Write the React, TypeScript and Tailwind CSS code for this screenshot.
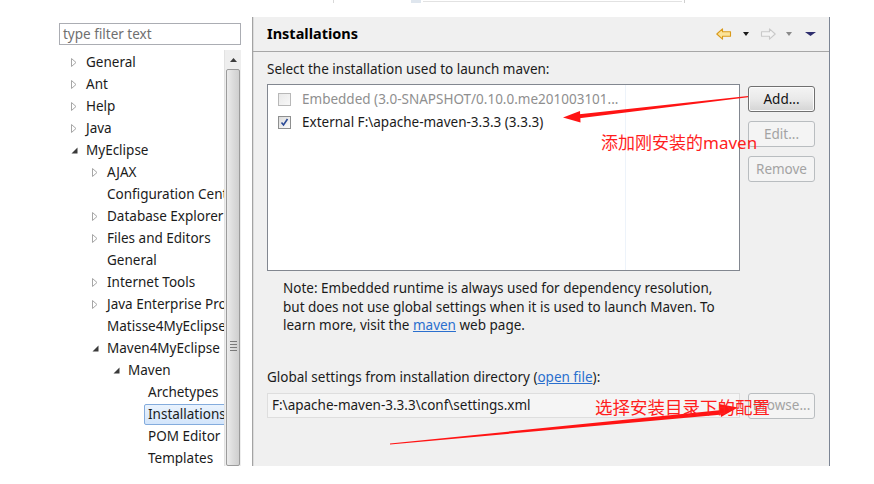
import React from "react";

type Node = { label: string; level: 0 | 1 | 2 | 3; state?: "open" | "closed"; selected?: boolean };

const tree: Node[] = [
  { label: "General", level: 0, state: "closed" },
  { label: "Ant", level: 0, state: "closed" },
  { label: "Help", level: 0, state: "closed" },
  { label: "Java", level: 0, state: "closed" },
  { label: "MyEclipse", level: 0, state: "open" },
  { label: "AJAX", level: 1, state: "closed" },
  { label: "Configuration Center", level: 1 },
  { label: "Database Explorer", level: 1, state: "closed" },
  { label: "Files and Editors", level: 1, state: "closed" },
  { label: "General", level: 1 },
  { label: "Internet Tools", level: 1, state: "closed" },
  { label: "Java Enterprise Project", level: 1, state: "closed" },
  { label: "Matisse4MyEclipse", level: 1 },
  { label: "Maven4MyEclipse", level: 1, state: "open" },
  { label: "Maven", level: 2, state: "open" },
  { label: "Archetypes", level: 3 },
  { label: "Installations", level: 3, selected: true },
  { label: "POM Editor", level: 3 },
  { label: "Templates", level: 3 },
];

const indent = ["pl-[8px]", "pl-[29px]", "pl-[50px]", "pl-[70px]"];

function Twisty({ state }: { state?: "open" | "closed" }) {
  return (
    <span className="w-[14px] mr-[5px] flex items-center justify-center shrink-0">
      {state === "closed" && (
        <svg width="6" height="9" viewBox="0 0 6 9">
          <path d="M0.5 0.5 L5 4.5 L0.5 8.5 Z" fill="#fff" stroke="#a6a6a6" />
        </svg>
      )}
      {state === "open" && (
        <svg width="7" height="7" viewBox="0 0 7 7">
          <path d="M6.5 0.5 L6.5 6.5 L0.5 6.5 Z" fill="#3a3a3a" />
        </svg>
      )}
    </span>
  );
}

function Checkbox({ checked, disabled }: { checked?: boolean; disabled?: boolean }) {
  return (
    <span
      className={
        disabled
          ? "w-[13px] h-[13px] border border-[#b8b8b8] bg-gradient-to-br from-[#e9e9e9] to-[#f8f8f8] flex items-center justify-center shrink-0"
          : "w-[13px] h-[13px] border border-[#8e8f8f] bg-gradient-to-br from-[#dcdcdc] to-[#fbfbfb] flex items-center justify-center shrink-0"
      }
    >
      {checked && (
        <svg width="9" height="9" viewBox="0 0 9 9">
          <path d="M1.5 4.5 L3.5 7 L7.5 1" fill="none" stroke="#2b4a96" strokeWidth="1.6" />
        </svg>
      )}
    </span>
  );
}

function Button({ label, disabled }: { label: string; disabled?: boolean }) {
  return (
    <div
      className={
        disabled
          ? "h-[26px] w-[67px] rounded-[3px] border border-[#b9bdc0] bg-[#f4f4f4] text-[#a3a3a3] flex items-center justify-center"
          : "h-[26px] w-[67px] rounded-[3px] border border-[#707070] bg-gradient-to-b from-[#f4f4f4] via-[#e9e9e9] to-[#d4d4d4] text-[#111] flex items-center justify-center shadow-[inset_0_0_0_1px_#fcfcfc]"
      }
    >
      {label}
    </div>
  );
}

function NavArrow({ enabled, dir }: { enabled: boolean; dir: "left" | "right" }) {
  const d =
    dir === "left"
      ? "M0.8 6 L6.5 0.8 L6.5 3.7 L14.5 3.7 L14.5 8.3 L6.5 8.3 L6.5 11.2 Z"
      : "M15.2 6 L9.5 0.8 L9.5 3.7 L1.5 3.7 L1.5 8.3 L9.5 8.3 L9.5 11.2 Z";
  return (
    <svg width="16" height="12" viewBox="0 0 16 12">
      <path
        d={d}
        fill={enabled ? "#fbe39a" : "#f4f4f4"}
        stroke={enabled ? "#d99a1c" : "#c9c9c9"}
        strokeWidth="1.1"
        strokeLinejoin="round"
      />
    </svg>
  );
}

function DropTri({ color, w = 6 }: { color: string; w?: number }) {
  return (
    <svg width={w + 1} height="4" viewBox={`0 0 ${w + 1} 4`}>
      <path d={`M0 0 L${w + 1} 0 L${(w + 1) / 2} 4 Z`} fill={color} />
    </svg>
  );
}

export default function App() {
  return (
    <div className="w-[874px] h-[484px] bg-white relative overflow-hidden flex flex-col font-['Noto_Sans','Noto_Sans_CJK_SC',sans-serif] text-[13.5px] text-[#1b1b1b]">
      {/* leftover edge of the window above */}
      <div className="h-[3px] flex items-start">
        <div className="ml-[333px] w-px h-[3px] bg-[#d8d8d8]" />
        <div className="ml-[77px] w-[10px] h-[3px] bg-[#dfe6ee]" />
        <div className="ml-[2px] w-[259px] h-[2px] border-b border-[#e2e2e2]" />
        <div className="ml-[2px] w-px h-[3px] bg-[#cfcfcf]" />
      </div>

      <div className="flex items-start">
        {/* left: filter + tree */}
        <div className="ml-[59px] mt-[20px] w-[182px] flex flex-col">
          <div className="h-[22px] border border-[#abadb3] bg-white flex items-center px-[3px] text-[#6f6f6f]">
            type filter text
          </div>
          <div className="mt-[5px] h-[416px] flex">
            <div className="flex-1 overflow-hidden flex flex-col pt-[1px]">
              {tree.map((n, i) => (
                <div key={i} className={`h-[22px] shrink-0 flex items-center whitespace-nowrap ${indent[n.level]}`}>
                  <Twisty state={n.state} />
                  {n.selected ? (
                    <span className="-ml-[4px] pl-[3px] flex-1 h-[21px] flex items-center border border-[#84acdd] rounded-[2px] bg-gradient-to-b from-[#eaf3fd] to-[#d3e5fb]">
                      {n.label}
                    </span>
                  ) : (
                    <span>{n.label}</span>
                  )}
                </div>
              ))}
            </div>
            {/* scrollbar */}
            <div className="w-[17px] bg-[#eeeeee] border-l border-[#e2e2e2] flex flex-col pt-[1px]">
              <div className="h-[18px] flex items-center justify-center">
                <svg width="7" height="4" viewBox="0 0 7 4">
                  <path d="M0 4 L3.5 0 L7 4 Z" fill="#3c3c3c" />
                </svg>
              </div>
              <div className="flex-1 mx-[1px] rounded-[2px] border border-[#9b9b9b] bg-gradient-to-r from-[#ececec] via-[#dcdcdc] to-[#cfcfcf] flex items-center justify-center">
                <div className="flex flex-col gap-[2px] mt-[157px]">
                  <div className="w-[7px] h-px bg-[#7a7a7a]" />
                  <div className="w-[7px] h-px bg-[#7a7a7a]" />
                  <div className="w-[7px] h-px bg-[#7a7a7a]" />
                  <div className="w-[7px] h-px bg-[#7a7a7a]" />
                </div>
              </div>
            </div>
          </div>
        </div>

        {/* right: preference page */}
        <div className="ml-[11px] mt-[14px] w-[578px] h-[449px] bg-[#f0f0f0] border-l border-[#a3a3a3] border-r border-r-[#7c8594] shadow-[inset_1px_0_0_#dcdcdc] flex flex-col">
          <div className="h-[35px] border-b border-[#a7a7a7] flex items-center pl-[14px] pr-[13px]">
            <span className="font-bold text-[14.5px] text-black">Installations</span>
            <div className="ml-auto flex items-center">
              <NavArrow enabled dir="left" />
              <span className="ml-[11px]"><DropTri color="#1a1a1a" w={5} /></span>
              <span className="ml-[11px]"><NavArrow enabled={false} dir="right" /></span>
              <span className="ml-[10px]"><DropTri color="#8a8a8a" w={5} /></span>
              <span className="ml-[13px]"><DropTri color="#2e2e6e" w={10} /></span>
            </div>
          </div>

          <div className="pl-[14px] flex flex-col">
            <div className="mt-[8px] leading-[18px]">Select the installation used to launch maven:</div>
            <div className="mt-[6px] flex gap-[8px]">
              <div className="w-[473px] h-[187px] bg-white border border-[#828790] flex">
                <div className="w-[358px] border-r border-[#edf3fa] pt-[3px] flex flex-col overflow-hidden">
                  <div className="h-[23px] pl-[10px] flex items-center whitespace-nowrap">
                    <Checkbox disabled />
                    <span className="ml-[11px] text-[#8f8f8f]">Embedded (3.0-SNAPSHOT/0.10.0.me201003101...</span>
                  </div>
                  <div className="h-[23px] pl-[10px] flex items-center whitespace-nowrap">
                    <Checkbox checked />
                    <span className="ml-[11px]">External F:\apache-maven-3.3.3 (3.3.3)</span>
                  </div>
                </div>
              </div>
              <div className="flex flex-col gap-[9px] pt-[2px]">
                <Button label="Add..." />
                <Button label="Edit..." disabled />
                <Button label="Remove" disabled />
              </div>
            </div>

            <div className="mt-[8px] pl-[16px] leading-[18.5px] whitespace-nowrap">
              Note: Embedded runtime is always used for dependency resolution,
              <br />
              but does not use global settings when it is used to launch Maven. To
              <br />
              learn more, visit the <span className="text-[#2a6fce] underline">maven</span> web page.
            </div>

            <div className="mt-[33px] leading-[18px]">
              Global settings from installation directory (
              <span className="text-[#2a6fce] underline">open file</span>):
            </div>
            <div className="mt-[7px] flex gap-[8px]">
              <div className="w-[473px] h-[25px] bg-[#f5f5f5] border border-[#dedede] flex items-center pl-[4px]">
                F:\apache-maven-3.3.3\conf\settings.xml
              </div>
              <Button label="Browse..." disabled />
            </div>
          </div>
        </div>
      </div>

      {/* red annotations drawn on top of the screenshot */}
      <svg className="absolute left-0 top-0 pointer-events-none" width="874" height="484" viewBox="0 0 874 484">
        <path d="M748 96 L577 114.5 L577.4 118.5 L748 97.2 Z" fill="#ff1414" />
        <path d="M563 117.5 L580 111 L580.5 122.5 Z" fill="#ff1414" />
        <path d="M390 443.5 L722 410 L722.6 414.5 L390 444.5 Z" fill="#ff1414" />
        <path d="M738 407.5 L719 404 L721 417 Z" fill="#ff1414" />
      </svg>
      <div className="absolute left-[601px] top-[132px] text-[17px] leading-[22px] text-[#ff1e1e] whitespace-nowrap">
        添加刚安装的maven
      </div>
      <div className="absolute left-[595px] top-[396px] text-[17.5px] leading-[22px] text-[#ff1e1e] whitespace-nowrap">
        选择安装目录下的配置
      </div>
    </div>
  );
}
